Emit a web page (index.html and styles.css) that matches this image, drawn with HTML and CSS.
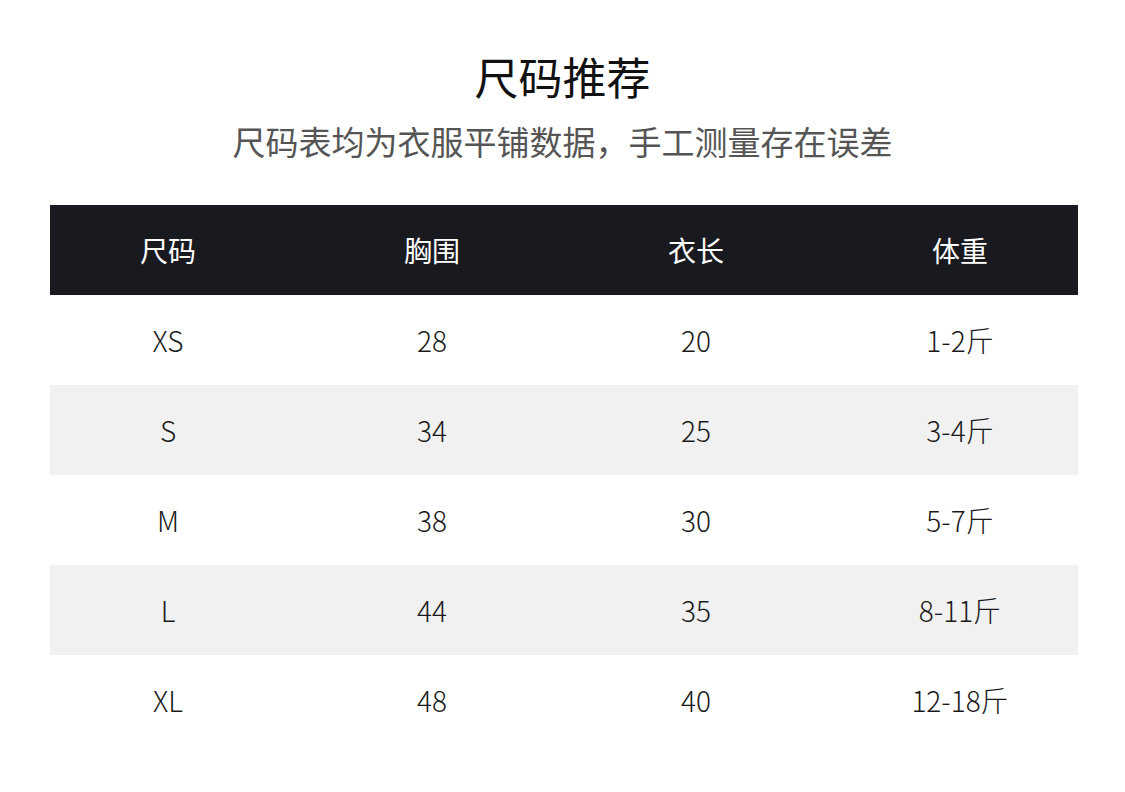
FILE: index.html
```html
<!DOCTYPE html>
<html lang="zh">
<head>
<meta charset="utf-8">
<link rel="stylesheet" href="styles.css">
</head>
<body>
<div class="page">
  <h1 class="title">尺码推荐</h1>
  <p class="subtitle">尺码表均为衣服平铺数据，手工测量存在误差</p>
  <div class="table">
    <div class="row head"><div class="cells"><span>尺码</span><span>胸围</span><span>衣长</span><span>体重</span></div></div>
    <div class="row"><div class="cells"><span>XS</span><span>28</span><span>20</span><span>1-2斤</span></div></div>
    <div class="row alt"><div class="cells"><span>S</span><span>34</span><span>25</span><span>3-4斤</span></div></div>
    <div class="row"><div class="cells"><span>M</span><span>38</span><span>30</span><span>5-7斤</span></div></div>
    <div class="row alt"><div class="cells"><span>L</span><span>44</span><span>35</span><span>8-11斤</span></div></div>
    <div class="row"><div class="cells"><span>XL</span><span>48</span><span>40</span><span>12-18斤</span></div></div>
  </div>
</div>
</body>
</html>
```
FILE: styles.css
```css
html, body {
  margin: 0;
  padding: 0;
  background: #ffffff;
}
.page {
  width: 1125px;
  height: 792px;
  font-family: "Noto Sans CJK SC", "Noto Sans", sans-serif;
  color: #1a1a1a;
  padding-top: 46px;
  box-sizing: border-box;
}
.title {
  margin: 0;
  text-align: center;
  font-size: 44px;
  font-weight: 400;
  line-height: 60px;
  color: #111111;
}
.subtitle {
  margin: 10px 0 0;
  text-align: center;
  font-size: 33px;
  font-weight: 400;
  line-height: 50px;
  color: #555555;
}
.table {
  margin: 39px 47px 0 50px;
}
.row {
  height: 90px;
}
.row.alt {
  background: #f1f1f1;
}
.row.head {
  background: #191920;
  color: #ffffff;
}
.cells {
  display: grid;
  grid-template-columns: repeat(4, 264px);
  margin-left: -14px;
  height: 100%;
  align-items: center;
  justify-items: center;
  font-size: 28px;
  font-weight: 300;
  line-height: 40px;
}
.head .cells {
  font-weight: 400;
  font-size: 28px;
}
```
